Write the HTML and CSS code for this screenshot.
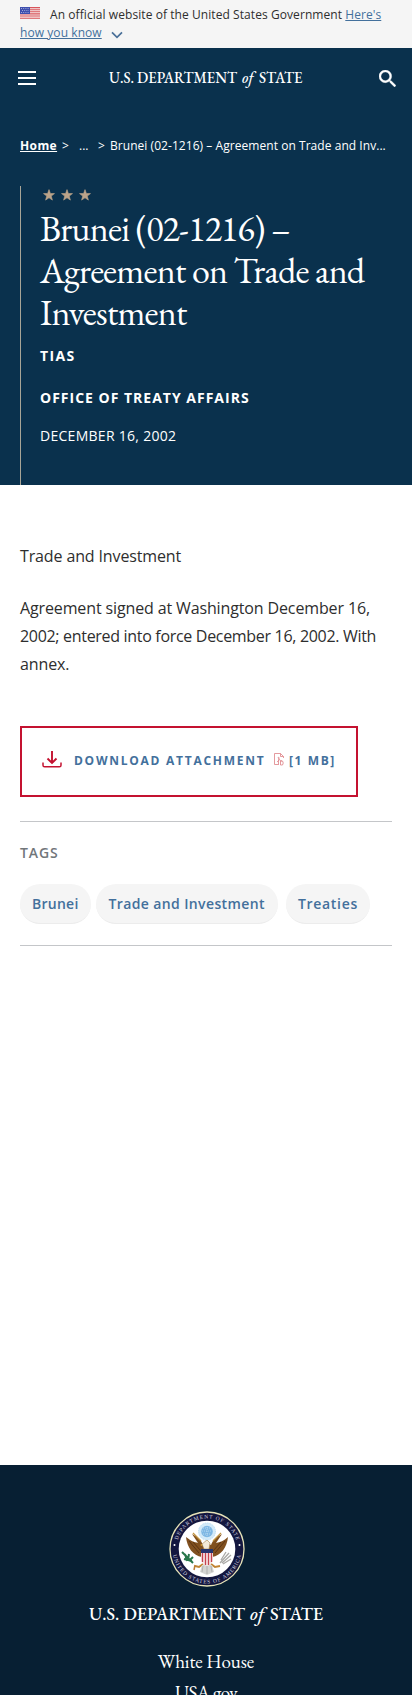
FILE: index.html
```html
<!DOCTYPE html>
<html lang="en">
<head>
<meta charset="utf-8">
<meta name="viewport" content="width=device-width, initial-scale=1">
<title>Brunei (02-1216) – Agreement on Trade and Investment</title>
<link rel="stylesheet" href="styles.css">
</head>
<body>
<div class="page">
  <div class="banner">
    <svg class="flag" viewBox="0 0 20 12"><rect width="20" height="12" fill="#f7e9e8"/><path d="M0 .6h20M0 2.7h20M0 4.8h20M0 6.9h20M0 9h20M0 11.3h20" stroke="#d8545a" stroke-width="1.1"/><rect width="10" height="7" fill="#3f4fae"/><path d="M1 1.5h8M2 3.5h7M1 5.5h8" stroke="#b9c0e6" stroke-width=".8" stroke-dasharray="1 1.2"/></svg><span class="banner-text">An official website of the United States Government</span> <a class="banner-link" href="#">Here's<br>how you know</a><svg class="chevron" viewBox="0 0 12 8"><path d="M1 1.3l5 5 5-5" fill="none" stroke="#4a7099" stroke-width="1.7"/></svg>
  </div>

  <header class="header">
    <svg class="menu" viewBox="0 0 18 14"><path d="M0 1h18M0 7h18M0 13h18" stroke="#fff" stroke-width="2"/></svg>
    <svg class="wordmark" viewBox="0 0 194 22"><g font-size="15.500"><text x="0" y="16" textLength="128" lengthAdjust="spacingAndGlyphs">U.S. DEPARTMENT</text><text x="133" y="16" font-style="italic">of</text><text x="150" y="16" textLength="43.500" lengthAdjust="spacingAndGlyphs">STATE</text></g></svg>
    <svg class="search" viewBox="3 3 17.5 17.5"><path fill="#fff" stroke="#fff" stroke-width=".4" d="M15.5 14h-.79l-.28-.27A6.471 6.471 0 0 0 16 9.500 6.500 6.500 0 1 0 9.500 16c1.610 0 3.090-.59 4.230-1.570l.27.28v.79l5 4.990L20.490 19l-4.990-5zm-6 0C7.010 14 5 11.990 5 9.500S7.010 5 9.500 5 14 7.010 14 9.500 11.990 14 9.500 14z"/></svg>
  </header>

  <section class="hero">
    <nav class="crumbs"><a href="#">Home</a><span class="sep1">&gt;</span><span class="dots">...</span><span class="sep2">&gt;</span><span class="current">Brunei (02-1216) – Agreement on Trade and Inv...</span></nav>
    <div class="hero-body">
      <svg class="stars" viewBox="0 0 48 12"><g fill="#bca48a" stroke="#bca48a" stroke-width=".6"><path id="star" d="M6 .6l1.400 3.900 4.100.1-3.200 2.500 1.100 4L6 8.800l-3.400 2.300 1.100-4L.5 4.600l4.100-.1z"/><use href="#star" x="18"/><use href="#star" x="36"/></g></svg>
      <h1 class="title"><span>Brunei (02-1216) –</span> <span>Agreement on Trade and</span> <span>Investment</span></h1>
      <p class="kind">TIAS</p>
      <p class="office">OFFICE OF TREATY AFFAIRS</p>
      <p class="date">DECEMBER 16, 2002</p>
    </div>
  </section>

  <main class="main">
    <p class="text">Trade and Investment</p>
    <p class="text">Agreement signed at Washington December 16, <span class="snug">2002; entered into force December 16, 2002. With</span> annex.</p>
    <a class="download" href="#">
      <svg class="dl-icon" viewBox="0 0 20 17"><path d="M10 0v12M5.500 7.500l4.500 4.500 4.500-4.500" fill="none" stroke="#c41230" stroke-width="1.900"/><path d="M1 11.500v2.700q0 1.600 1.600 1.600h14.800q1.600 0 1.600-1.600v-2.700" fill="none" stroke="#c41230" stroke-width="1.500"/></svg>
      <span class="dl-label">DOWNLOAD ATTACHMENT</span>
      <svg class="pdf" viewBox="0 0 11 13"><path d="M4 11.500H.5V.5h6l3 3V5M6.500.5v3h3M3 9c3-2 2-5 1.500-5S4 7 8 8" fill="none" stroke="#dd8085" stroke-width=".8"/><path d="M4.500 12V6.500M6.500 12V8h2q1.500 2 0 4z" fill="none" stroke="#dd8085" stroke-width=".8"/></svg>
      <span class="dl-size">[1 MB]</span>
    </a>
    <section class="tags">
      <h2 class="tags-title">TAGS</h2>
      <div class="tag-list"><a class="tag" href="#">Brunei</a><a class="tag wide" href="#">Trade and Investment</a><a class="tag last" href="#">Treaties</a></div>
    </section>
  </main>

  <footer class="footer">
    <svg class="seal" viewBox="0 0 76 76">
      <defs><path id="top-arc" d="M7.500 38a30.500 30.500 0 0 1 61 0"/><path id="low-arc" d="M3.500 38a34.500 34.500 0 0 0 69 0"/></defs>
      <circle cx="38" cy="38" r="37" fill="#14173f" stroke="#e6e3b8" stroke-width="1.300"/>
      <circle cx="38" cy="38" r="28.300" fill="#fff"/>
      <g class="seal-text"><text><textPath href="#top-arc" startOffset="9" textLength="78">DEPARTMENT OF STATE</textPath></text><text><textPath href="#low-arc" startOffset="6" textLength="96">UNITED STATES OF AMERICA</textPath></text></g>
      <circle cx="5.500" cy="34" r="1" fill="#fff"/><circle cx="70.500" cy="34" r="1" fill="#fff"/>
      <circle cx="38" cy="20.500" r="8.500" fill="#d3eaf8" stroke="#b4dcf4" stroke-dasharray="1 .8"/><circle cx="38" cy="20.500" r="5.800" fill="#7fb8e4"/>
      <path d="M34 17h8M33 20h10M34 23h8M38 16v9" stroke="#d8edfa" stroke-width=".6" stroke-dasharray="1 1"/>
      <path d="M33 46C24 45 18 36 17 26c5 4 8 5 12 6l-6-9c6 3 9 6 11 11l4-2 4 2c2-5 5-8 11-11l-6 9c4-1 8-2 12-6-1 10-7 19-16 20z" fill="#80501f"/>
      <path d="M20 30l10 12M24 31l8 9M56 30L46 42M52 31l-8 9" stroke="#4f2c12" stroke-width=".8"/>
      <path d="M24 22l8 8M52 22l-8 8" stroke="#c19440" stroke-width="1.300"/>
      <path d="M35 38l-2-5 5-4 3 3-1 6z" fill="#f3ead8" stroke="#a4834c" stroke-width=".6"/><path d="M33 33l-2 1 2 1z" fill="#dfa12f"/>
      <path d="M34 53l-4 3-4-1M42 53l4 3 5-1" stroke="#c18432" stroke-width="2" fill="none"/>
      <path d="M33 54h10l2 7-7 3-7-3z" fill="#d5d5d2"/><path d="M34 55l-1 6M38 55v8M42 55l1 6" stroke="#999" stroke-width=".6"/>
      <path d="M32 38h12v11q-1 4-6 6-5-2-6-6z" fill="#f5e6e7"/><path d="M33.500 42v9M36.500 42v12M39.500 42v12M42.500 42v9" stroke="#c5424e" stroke-width="1.300"/><path d="M32 38h12v4H32z" fill="#25356e"/>
      <path d="M13 41l11 11M15 48l8 2M16 43l2 7M20 43l-1 6M24 46l-4 4" stroke="#28774a" stroke-width="2"/>
      <path d="M26 54l-1 5" stroke="#ba7b35" stroke-width="1.500"/>
      <path d="M51 52l9-10M53 52l9-8M52 49l5-8M54 53l8-5" stroke="#aaa9a6" stroke-width="1.300"/>
    </svg>
    <svg class="footer-mark" viewBox="0 0 234 26"><g font-size="19"><text x="0" y="18.500" textLength="156" lengthAdjust="spacingAndGlyphs">U.S. DEPARTMENT</text><text x="161" y="18.500" font-style="italic">of</text><text x="181" y="18.500" textLength="53" lengthAdjust="spacingAndGlyphs">STATE</text></g></svg>
    <a class="flink" href="#">White House</a>
    <a class="flink usa" href="#">USA.gov</a>
  </footer>
</div>
</body>
</html>
```
FILE: styles.css
```css
* { box-sizing: border-box; }
body { margin: 0; background: #fff; font-family: "Open Sans", sans-serif; }
p, h1, h2 { margin: 0; }
a { color: #43709c; }
svg { display: block; }
.page { height: 1695px; overflow: hidden; display: flex; flex-direction: column; }
.banner { flex: none; height: 48px; padding: 6px 20px 0; background: #f5f5f5; font-size: 12px; line-height: 18px; letter-spacing: .07px; color: #2e2e2e; white-space: nowrap; }
.flag { display: inline-block; width: 20px; height: 12px; margin-right: 10px; vertical-align: 0; }
.chevron { display: inline-block; width: 12px; height: 8px; margin-left: 9px; vertical-align: -2px; }
.header { flex: none; height: 60px; padding: 0 16px 0 18px; background: #0a314d; display: flex; align-items: center; justify-content: space-between; }
.menu { width: 18px; height: 14px; }
.wordmark { width: 194px; height: 22px; margin-right: 4px; overflow: visible; }
.wordmark text, .footer-mark text { font-family: "EB Garamond", "Liberation Serif", serif; font-weight: 500; fill: #fff; }
.search { width: 17px; height: 17px; }
.hero { flex: none; height: 377px; padding: 28px 20px 0; background: #0a314d; color: #fff; }
.crumbs { display: flex; height: 20px; font-size: 12px; line-height: 20px; white-space: nowrap; }
.crumbs a { flex: none; color: #fff; font-weight: 700; width: 42px; letter-spacing: .4px; }
.sep1 { width: 17px; }
.dots { width: 19px; }
.sep2 { width: 12px; }
.current { letter-spacing: .05px; }
.hero-body { height: 299px; margin-top: 30px; padding: 3px 0 0 19px; border-left: 1px solid #a9a597; }
.stars { width: 48px; height: 12px; margin-left: 3px; }
.title { margin-top: 7px; font-family: "EB Garamond", "Liberation Serif", serif; font-weight: 400; font-size: 36px; line-height: 42px; letter-spacing: -.8px; white-space: nowrap; }
.title span { display: block; }
.kind, .office { font-size: 14px; line-height: 20px; font-weight: 700; letter-spacing: 1px; }
.kind { margin-top: 12px; letter-spacing: 1.400px; }
.office { margin-top: 22px; }
.date { margin-top: 18px; font-size: 14px; line-height: 20px; letter-spacing: .28px; }
.main { flex: 1; padding: 57px 20px 0; color: #2e2e2e; }
.text { font-size: 16px; line-height: 28px; margin-bottom: 24px; letter-spacing: -.130px; }
.snug { letter-spacing: -.310px; }
.download { display: flex; align-items: center; width: 338px; height: 71px; margin-top: 48px; padding: 0 0 1px 20px; border: 2px solid #c41230; font-size: 12px; font-weight: 700; line-height: 18px; text-decoration: none; white-space: nowrap; }
.dl-icon { width: 20px; height: 17px; margin-bottom: 4px; }
.dl-label { width: 200px; margin-left: 12px; letter-spacing: 1.740px; }
.pdf { width: 11px; height: 13px; margin-bottom: 3px; }
.dl-size { margin-left: 4px; letter-spacing: 1.600px; }
.tags { height: 125px; margin-top: 24px; border: solid #c4c6c9; border-width: 1px 0; padding-top: 21px; }
.tags-title { font-size: 14px; line-height: 20px; font-weight: 600; letter-spacing: .9px; color: #71767a; }
.tag-list { display: flex; margin-top: 21px; }
.tag { height: 40px; padding: 0 12px; border-radius: 20px; background: #f5f5f5; font-size: 14px; line-height: 40px; font-weight: 600; letter-spacing: .25px; text-decoration: none; margin-right: 5px; border-bottom: 1px solid #ececec; }
.tag.wide { letter-spacing: .38px; padding: 0 13px; margin-right: 8px; }
.tag.last { letter-spacing: .7px; margin-right: 0; }
.footer { flex: none; height: 230px; padding-top: 46px; background: #071f33; display: flex; flex-direction: column; align-items: center; }
.seal { flex: none; width: 76px; height: 76px; margin-left: 2px; }
.seal-text { font-family: "Liberation Serif", serif; font-size: 5.400px; fill: #dddde4; }
.footer-mark { flex: none; width: 234px; height: 26px; margin-top: 14px; overflow: visible; }
.flink { flex: none; margin-top: 19px; font-family: "EB Garamond", "Liberation Serif", serif; font-size: 19px; line-height: 31px; letter-spacing: -.1px; color: #fff; text-decoration: none; }
.usa { margin-top: 0; letter-spacing: -.6px; }
```
